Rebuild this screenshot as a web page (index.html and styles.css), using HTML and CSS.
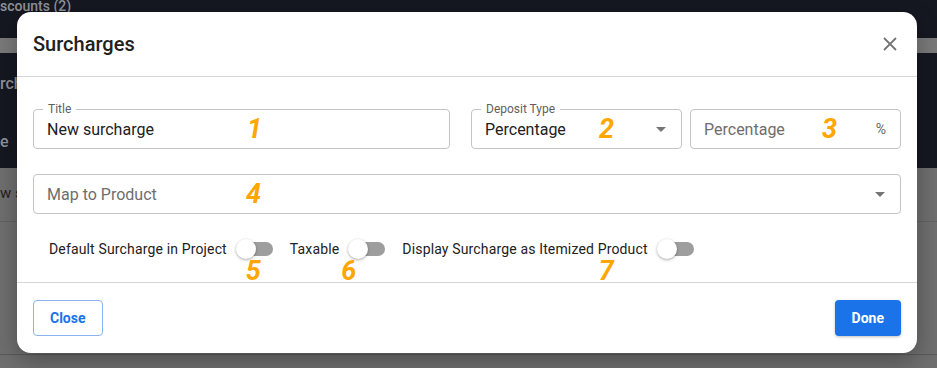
FILE: index.html
```html
<!DOCTYPE html>
<html lang="en">
<head>
    <meta charset="UTF-8">
    <title>Surcharges</title>
    <link rel="stylesheet" href="styles.css">
</head>
<body>
    <!-- Page behind the dialog (dimmed) -->
    <div class="page">
        <div class="page-top">scounts (2)</div>
        <div class="page-strip"></div>
        <div class="page-dark">
            <div class="page-dark-row">rch</div>
            <div class="page-dark-row">e</div>
        </div>
        <div class="page-row">w s</div>
        <div class="page-rest"></div>
    </div>

    <!-- Dialog -->
    <div class="dialog">
        <div class="dialog-header">
            <h2>Surcharges</h2>
            <button class="icon-btn" aria-label="Close">
                <svg width="14" height="14" viewBox="0 0 14 14">
                    <path d="M1 1L13 13M13 1L1 13" stroke="#757575" stroke-width="1.8" fill="none"/>
                </svg>
            </button>
        </div>

        <div class="dialog-content">
            <div class="row">
                <div class="field field-title">
                    <span class="field-label">Title</span>
                    <span class="field-value">New surcharge</span>
                    <span class="marker m1">1</span>
                </div>
                <div class="field field-type">
                    <span class="field-label">Deposit Type</span>
                    <span class="field-value">Percentage</span>
                    <span class="caret"></span>
                    <span class="marker m2">2</span>
                </div>
                <div class="field field-pct">
                    <span class="field-value placeholder">Percentage</span>
                    <span class="suffix">%</span>
                    <span class="marker m3">3</span>
                </div>
            </div>

            <div class="field field-map">
                <span class="field-value placeholder">Map to Product</span>
                <span class="caret"></span>
                <span class="marker m4">4</span>
            </div>

            <div class="toggles">
                <label class="toggle">Default Surcharge in Project <span class="switch"><span class="marker m5">5</span></span></label>
                <label class="toggle">Taxable <span class="switch"><span class="marker m6">6</span></span></label>
                <label class="toggle">Display Surcharge as Itemized Product <span class="switch"><span class="marker m7">7</span></span></label>
            </div>
        </div>

        <div class="dialog-footer">
            <button class="btn btn-outline">Close</button>
            <button class="btn btn-primary">Done</button>
        </div>
    </div>
</body>
</html>
```

FILE: styles.css
```css
/* General */
* {
    box-sizing: border-box;
}

body {
    margin: 0;
    font-family: 'Roboto', 'Liberation Sans', sans-serif;
    background: #6f6f6f;
    height: 368px;
    overflow: hidden;
    position: relative;
}

/* Background page */
.page-top {
    height: 38px;
    background: #151821;
    color: #8f929a;
    font-size: 14px;
    font-weight: 500;
    line-height: 12px;
}

.page-strip {
    height: 15px;
    background: #7a7a7a;
}

.page-dark {
    height: 115px;
    background: #151821;
    color: #8f929a;
    font-size: 16px;
    font-weight: 500;
    padding-top: 21px;
}

.page-dark-row {
    height: 58px;
}

.page-row {
    height: 54px;
    line-height: 50px;
    font-size: 15px;
    color: #222;
    border-bottom: 1px solid #626262;
}

.page-rest {
    height: 133px;
    border-bottom: 1px solid #5a5a5a;
}

/* Dialog */
.dialog {
    position: absolute;
    left: 17px;
    top: 12px;
    width: 900px;
    height: 341px;
    background: #fff;
    border-radius: 14px;
    box-shadow: 0 8px 24px rgba(0, 0, 0, 0.3);
    display: flex;
    flex-direction: column;
}

.dialog-header {
    height: 65px;
    display: flex;
    align-items: center;
    justify-content: space-between;
    padding: 0 20px 0 16px;
    border-bottom: 1px solid #d6d6d6;
}

.dialog-header h2 {
    margin: 0;
    font-size: 20px;
    font-weight: 500;
    color: #212121;
}

.icon-btn {
    border: none;
    background: none;
    padding: 0;
    cursor: pointer;
    display: flex;
}

.dialog-content {
    flex: 1;
    padding: 32px 16px 0;
    border-bottom: 1px solid #d6d6d6;
}

.row {
    display: flex;
    margin-bottom: 25px;
}

/* Outlined fields */
.field {
    position: relative;
    height: 40px;
    border: 1px solid #c4c4c4;
    border-radius: 4px;
    display: flex;
    align-items: center;
    padding: 0 13px;
}

.field-title {
    width: 417px;
    margin-right: 21px;
}

.field-type {
    width: 211px;
    margin-right: 8px;
}

.field-pct {
    width: 211px;
}

.field-label {
    position: absolute;
    left: 9px;
    top: -8px;
    padding: 0 5px;
    background: #fff;
    font-size: 12px;
    line-height: 14px;
    color: #5f5f5f;
}

.field-value {
    font-size: 16px;
    color: #212121;
    padding-top: 1px;
}

.placeholder {
    color: #6e6e6e;
}

.suffix {
    margin-left: auto;
    margin-right: 1px;
    font-size: 14px;
    color: #666;
}

.caret {
    margin-left: auto;
    margin-right: 2px;
    width: 0;
    height: 0;
    border-left: 5px solid transparent;
    border-right: 5px solid transparent;
    border-top: 5px solid #757575;
}

/* Toggles */
.toggles {
    display: flex;
    align-items: center;
    padding: 27px 0 0 16px;
}

.toggle {
    display: flex;
    align-items: center;
    font-size: 14px;
    letter-spacing: 0.15px;
    color: #212121;
    margin-right: 17px;
}

.switch {
    position: relative;
    width: 33px;
    height: 14px;
    margin-left: 13px;
    background: #9e9e9e;
    border-radius: 7px;
}

.switch::before {
    content: "";
    position: absolute;
    left: -4px;
    top: -3px;
    width: 20px;
    height: 20px;
    border-radius: 50%;
    background: #fff;
    box-shadow: 0 1px 3px rgba(0, 0, 0, 0.35);
}

/* Annotation numbers */
.marker {
    position: absolute;
    font-size: 27px;
    font-weight: 700;
    font-style: italic;
    letter-spacing: 0;
    color: #ffa600;
    line-height: 1;
}

.m1 { left: 213px; top: 6px; }
.m2 { left: 127px; top: 6px; }
.m3 { left: 131px; top: 6px; }
.m4 { left: 212px; top: 6px; }
.m5 { left: 6px; top: 16px; }
.m6 { left: -11px; top: 16px; }
.m7 { left: -62px; top: 16px; }

/* Footer */
.dialog-footer {
    height: 70px;
    display: flex;
    align-items: center;
    justify-content: space-between;
    padding: 0 16px;
}

.btn {
    height: 36px;
    padding: 0 15px;
    border-radius: 4px;
    font-family: inherit;
    font-size: 14px;
    font-weight: 700;
    cursor: pointer;
}

.btn-outline {
    background: #fff;
    color: #1a73e8;
    border: 1px solid #8ab4f0;
    padding: 0 16px;
}

.btn-primary {
    background: #1a73e8;
    color: #fff;
    border: none;
    padding: 0 17px;
    box-shadow: 0 1px 3px rgba(0, 0, 0, 0.25);
}
```
